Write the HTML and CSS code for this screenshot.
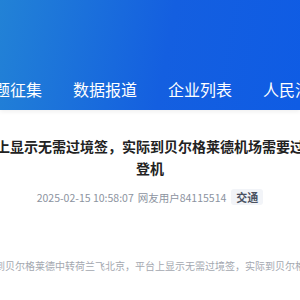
FILE: index.html
```html
<!DOCTYPE html>
<html lang="zh-CN">
<head>
    <meta charset="UTF-8">
    <title>网友留言</title>
    <link rel="stylesheet" href="styles.css">
</head>
<body>
<div class="header">
    <div class="nav">
        <a class="nav_item">问题征集</a>
        <a class="nav_item">数据报道</a>
        <a class="nav_item">企业列表</a>
        <a class="nav_item">人民消费</a>
    </div>
</div>

<div class="content">
    <h1 class="title">票务平台上显示无需过境签，实际到贝尔格莱德机场需要过境签才能登机</h1>
    <div class="meta">
        <span>2025-02-15 10:58:07</span>
        <span>网友用户84115514</span>
        <span class="tag">交通</span>
    </div>
    <p class="summary">我从上海到贝尔格莱德中转荷兰飞北京，平台上显示无需过境签，实际到贝尔格莱德机场被告知需要过境签才能登机。</p>
</div>
</body>
</html>
```

FILE: styles.css
```css
body {
    margin: 0;
    overflow: hidden;
    font-family: "Noto Sans CJK SC", "Noto Sans", sans-serif;
    background: #fff;
}

.header {
    height: 110px;
    background: linear-gradient(100deg, #2282d6 0%, #145fe0 55%, #0f5ce4 100%);
    box-shadow: 0 2px 4px rgba(0, 0, 0, 0.06);
    overflow: hidden;
}

.nav {
    display: flex;
    gap: 31px;
    margin-left: -22px;
    padding-top: 77px;
    white-space: nowrap;
}

.nav_item {
    color: #fff;
    font-size: 16px;
    line-height: 24px;
    flex-shrink: 0;
}

.content {
    width: 424px;
    margin-left: -62px;
}

.title {
    margin: 25px 0 0;
    font-size: 14px;
    line-height: 22px;
    font-weight: bold;
    color: #222;
    text-align: center;
}

.meta {
    display: flex;
    justify-content: center;
    align-items: center;
    gap: 4px;
    margin-top: 10px;
    font-size: 10.5px;
    color: #8c93a0;
}

.tag {
    margin-left: 1px;
    background: #f2f4f8;
    color: #4a5160;
    font-size: 11px;
    font-weight: bold;
    padding: 0 5px;
    line-height: 16px;
    border-radius: 3px;
}

.summary {
    margin: 53px 0 0;
    padding-left: 17px;
    font-size: 10px;
    line-height: 16px;
    color: #a4a8b0;
    white-space: nowrap;
}
```
